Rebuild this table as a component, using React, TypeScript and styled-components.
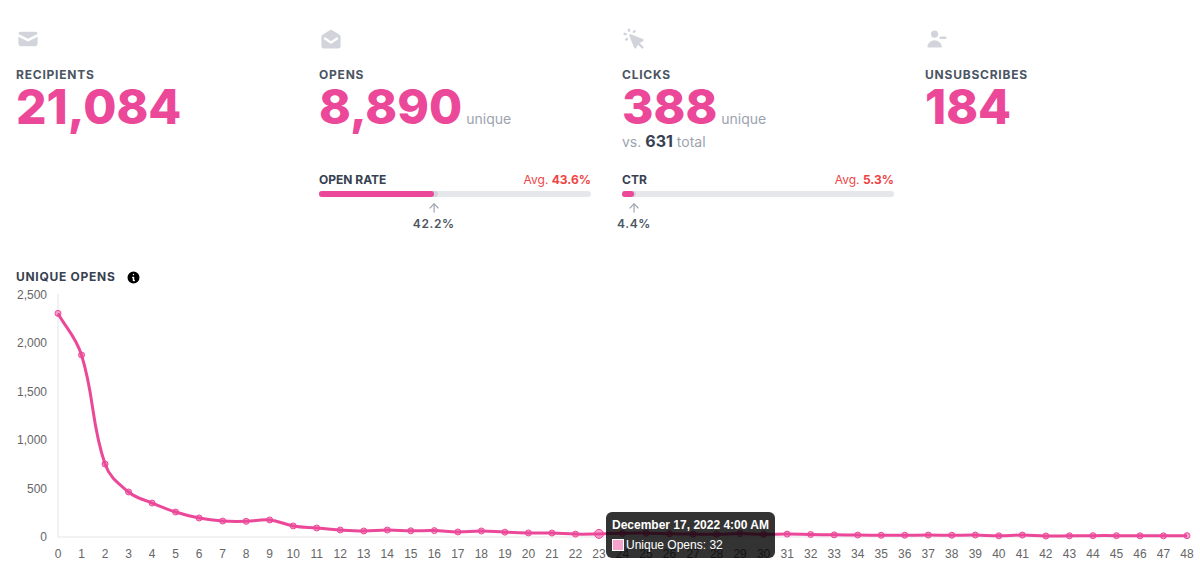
import React from 'react'
import { type ReactElement } from 'react'
import styled, { createGlobalStyle } from 'styled-components'

const GlobalStyle = createGlobalStyle`
  body {
    margin: 0;
    background: #fff;
    font-family: Inter, 'Noto Sans', sans-serif;
  }
`

const Page = styled.main`
  padding: 27px 16px 0;
  height: 588px;
  box-sizing: border-box;
  overflow: hidden;
`
const StatsGrid = styled.section`
  display: grid;
  grid-template-columns: repeat(4, 272px);
  column-gap: 31px;
`
const Column = styled.div`
  display: flex;
  flex-direction: column;
`
const StatBlock = styled.div`
  height: 145px;
  display: flex;
  flex-direction: column;
`
const IconWrap = styled.div`
  width: 24px;
  height: 24px;
  color: #d1d5db;
  svg { display: block; }
`
const Label = styled.div`
  margin-top: 16px;
  font-size: 12px;
  line-height: 16px;
  font-weight: 700;
  letter-spacing: 0.065em;
  color: #4b5563;
`
const ValueRow = styled.div`
  display: flex;
  align-items: baseline;
  gap: 4px;
`
const BigNumber = styled.span`
  font-size: 48px;
  line-height: 1;
  font-weight: 800;
  color: #ec4899;
`
const Unit = styled.span`
  font-size: 14px;
  color: #9ca3af;
`
const Total = styled.div`
  margin-top: 0;
  font-size: 14px;
  color: #9ca3af;
  b {
    font-size: 16px;
    font-weight: 700;
    color: #374151;
  }
`
const RateHead = styled.div`
  display: flex;
  justify-content: space-between;
  align-items: baseline;
  font-size: 12px;
  line-height: 16px;
`
const RateLabel = styled.span`
  font-weight: 700;
  color: #374151;
`
const Avg = styled.span`
  color: #ef4444;
  b { font-weight: 700; }
`
const Track = styled.div`
  margin-top: 3px;
  height: 6px;
  border-radius: 3px;
  background: #e5e7eb;
  display: flex;
`
const AvgFill = styled.div`
  height: 100%;
  border-radius: 3px;
  background: #d1d5db;
  display: flex;
`
const Fill = styled.div`
  height: 100%;
  border-radius: 3px;
  background: #ec4899;
`
const Marker = styled.div`
  margin-top: 4px;
  width: max-content;
  display: flex;
  flex-direction: column;
  align-items: center;
  transform: translateX(-50%);
  color: #9ca3af;
  svg { display: block; }
`
const MarkerValue = styled.span`
  margin-top: 1px;
  font-size: 12px;
  font-weight: 600;
  letter-spacing: 0.05em;
  color: #4b5563;
`
const ChartSection = styled.section`
  margin-top: 38px;
`
const ChartTitle = styled.div`
  display: flex;
  align-items: center;
  gap: 10px;
  font-size: 12px;
  line-height: 16px;
  font-weight: 700;
  letter-spacing: 0.06em;
  color: #374151;
  svg { display: block; color: #000; }
`
const ChartWrap = styled.div`
  position: relative;
  margin-top: 2px;
  svg { display: block; }
`
const Tooltip = styled.div`
  position: absolute;
  left: 590px;
  top: 225px;
  padding: 6px;
  border-radius: 6px;
  background: rgba(0, 0, 0, 0.8);
  color: #fff;
  font-family: 'Liberation Sans', Arial, sans-serif;
  font-size: 12px;
  line-height: 14px;
  white-space: nowrap;
`
const TooltipTitle = styled.div`
  font-weight: 700;
  margin-bottom: 6px;
`
const TooltipBody = styled.div`
  display: flex;
  align-items: center;
  gap: 2px;
`
const Swatch = styled.span`
  width: 10px;
  height: 10px;
  border: 1px solid #fff;
  background: #f5a3cc;
`

const MailIcon = (): ReactElement => (
  <svg width='24' height='24' viewBox='0 0 20 20' fill='currentColor'>
    <path d='M2.003 5.884L10 9.882l7.997-3.998A2 2 0 0016 4H4a2 2 0 00-1.997 1.884z' />
    <path d='M18 8.118l-8 4-8-4V14a2 2 0 002 2h12a2 2 0 002-2V8.118z' />
  </svg>
)
const MailOpenIcon = (): ReactElement => (
  <svg width='24' height='24' viewBox='0 0 20 20' fill='currentColor'>
    <path fillRule='evenodd' clipRule='evenodd' d='M2.94 6.412A2 2 0 002 8.108V16a2 2 0 002 2h12a2 2 0 002-2V8.108a2 2 0 00-.94-1.696l-6-3.75a2 2 0 00-2.12 0l-6 3.75zm2.615 2.423a1 1 0 10-1.11 1.664l5 3.333a1 1 0 001.11 0l5-3.333a1 1 0 00-1.11-1.664L10 11.798 5.555 8.835z' />
  </svg>
)
const CursorIcon = (): ReactElement => (
  <svg width='24' height='24' viewBox='0 0 20 20' fill='currentColor'>
    <path fillRule='evenodd' clipRule='evenodd' d='M6.672 1.911a1 1 0 10-1.932.518l.259.966a1 1 0 001.932-.518l-.26-.966zM2.429 4.74a1 1 0 10-.517 1.932l.966.259a1 1 0 00.517-1.932l-.966-.26zm8.814-.569a1 1 0 00-1.415-1.414l-.707.707a1 1 0 101.415 1.415l.707-.708zm-7.071 7.072l.707-.707A1 1 0 003.465 9.12l-.708.707a1 1 0 001.415 1.415zm3.2-5.171a1 1 0 00-1.3 1.3l4 10a1 1 0 001.823.075l1.38-2.759 3.018 3.02a1 1 0 001.414-1.415l-3.019-3.02 2.76-1.379a1 1 0 00-.076-1.822l-10-4z' />
  </svg>
)
const UserMinusIcon = (): ReactElement => (
  <svg width='24' height='24' viewBox='0 0 20 20' fill='currentColor'>
    <path d='M11 6a3 3 0 11-6 0 3 3 0 016 0zM14 17a6 6 0 00-12 0h12zM13 8a1 1 0 100 2h4a1 1 0 100-2h-4z' />
  </svg>
)
const InfoIcon = (): ReactElement => (
  <svg width='15' height='15' viewBox='0 0 20 20' fill='currentColor'>
    <path fillRule='evenodd' clipRule='evenodd' d='M18 10a8 8 0 11-16 0 8 8 0 0116 0zm-7-4a1 1 0 11-2 0 1 1 0 012 0zM9 9a1 1 0 000 2v3a1 1 0 001 1h1a1 1 0 100-2v-3a1 1 0 00-1-1H9z' />
  </svg>
)
const ArrowUp = (): ReactElement => (
  <svg width='14' height='14' viewBox='0 0 24 24' fill='none' stroke='currentColor' strokeWidth='2' strokeLinecap='round' strokeLinejoin='round'>
    <path d='m5 12 7-7 7 7' />
    <path d='M12 19V5' />
  </svg>
)

function RateBar ({ label, value, avg }: { label: string, value: number, avg: number }): ReactElement {
  return (
    <div>
      <RateHead>
        <RateLabel>{label}</RateLabel>
        <Avg>Avg. <b>{avg}%</b></Avg>
      </RateHead>
      <Track>
        <AvgFill style={{ width: `${avg}%` }}>
          <Fill style={{ width: `${(value / avg) * 100}%` }} />
        </AvgFill>
      </Track>
      <Marker style={{ marginLeft: `${value}%` }}>
        <ArrowUp />
        <MarkerValue>{value}%</MarkerValue>
      </Marker>
    </div>
  )
}

const opens = [
  2310, 1880, 754, 465, 351, 258, 196, 165, 162, 176, 114, 93, 72, 62, 72, 64, 66,
  52, 62, 50, 42, 41, 30, 32, 38, 40, 34, 30, 28, 36, 28, 30, 26, 22, 20, 18, 18,
  20, 18, 20, 12, 20, 10, 12, 14, 14, 12, 12, 14
]

const CHART_W = 1184
const CHART_H = 302
const X0 = 42
const X1 = 1171
const Y_TOP = 8
const Y_BOTTOM = 250
const MAX = 2500

interface Pt { x: number, y: number }

const px = (i: number): number => X0 + (i * (X1 - X0)) / (opens.length - 1)
const py = (v: number): number => Y_BOTTOM - (v / MAX) * (Y_BOTTOM - Y_TOP)

function buildPath (pts: Pt[], t = 0.4): string {
  const ctrl = pts.map((cur, i) => {
    const prev = pts[i - 1] ?? cur
    const next = pts[i + 1] ?? cur
    const d01 = Math.hypot(cur.x - prev.x, cur.y - prev.y)
    const d12 = Math.hypot(next.x - cur.x, next.y - cur.y)
    const total = d01 + d12 || 1
    const fa = (t * d01) / total
    const fb = (t * d12) / total
    return {
      prev: { x: cur.x - fa * (next.x - prev.x), y: Math.min(Y_BOTTOM, cur.y - fa * (next.y - prev.y)) },
      next: { x: cur.x + fb * (next.x - prev.x), y: Math.min(Y_BOTTOM, cur.y + fb * (next.y - prev.y)) }
    }
  })
  let d = `M${pts[0].x},${pts[0].y}`
  for (let i = 1; i < pts.length; i++) {
    const a = ctrl[i - 1].next
    const b = ctrl[i].prev
    d += ` C${a.x},${a.y} ${b.x},${b.y} ${pts[i].x},${pts[i].y}`
  }
  return d
}

function OpensChart (): ReactElement {
  const pts = opens.map((v, i) => ({ x: px(i), y: py(v) }))
  const ticks = [2500, 2000, 1500, 1000, 500, 0]
  const font = "'Liberation Sans', Arial, sans-serif"
  return (
    <ChartWrap>
      <svg width={CHART_W} height={CHART_H}>
        <line x1={X0} y1={Y_TOP - 1} x2={X0} y2={Y_BOTTOM} stroke='#e5e5e5' />
        <line x1={X0} y1={Y_BOTTOM} x2={X1} y2={Y_BOTTOM} stroke='#e5e5e5' />
        {ticks.map(t => (
          <text key={t} x={31} y={py(t) + 4} textAnchor='end' fontFamily={font} fontSize='12' fill='#666'>
            {t.toLocaleString('en-US')}
          </text>
        ))}
        {opens.map((_, i) => (
          <text key={i} x={px(i)} y={271} textAnchor='middle' fontFamily={font} fontSize='12' fill='#666'>
            {i}
          </text>
        ))}
        <path d={buildPath(pts)} fill='none' stroke='#ec4899' strokeWidth='3' />
        {pts.map((p, i) => (
          <circle key={i} cx={p.x} cy={p.y} r={i === 23 ? 4.5 : 3} fill='rgba(236,72,153,0.5)' stroke='#ec4899' strokeWidth='1' />
        ))}
      </svg>
      <Tooltip>
        <TooltipTitle>December 17, 2022 4:00 AM</TooltipTitle>
        <TooltipBody>
          <Swatch />
          <span>Unique Opens: 32</span>
        </TooltipBody>
      </Tooltip>
    </ChartWrap>
  )
}

export default function App (): ReactElement {
  return (
    <>
      <GlobalStyle />
      <Page>
        <StatsGrid>
          <Column>
            <StatBlock>
              <IconWrap><MailIcon /></IconWrap>
              <Label>RECIPIENTS</Label>
              <ValueRow><BigNumber>21,084</BigNumber></ValueRow>
            </StatBlock>
          </Column>
          <Column>
            <StatBlock>
              <IconWrap><MailOpenIcon /></IconWrap>
              <Label>OPENS</Label>
              <ValueRow><BigNumber>8,890</BigNumber><Unit>unique</Unit></ValueRow>
            </StatBlock>
            <RateBar label='OPEN RATE' value={42.2} avg={43.6} />
          </Column>
          <Column>
            <StatBlock>
              <IconWrap><CursorIcon /></IconWrap>
              <Label>CLICKS</Label>
              <ValueRow><BigNumber>388</BigNumber><Unit>unique</Unit></ValueRow>
              <Total>vs. <b>631</b> total</Total>
            </StatBlock>
            <RateBar label='CTR' value={4.4} avg={5.3} />
          </Column>
          <Column>
            <StatBlock>
              <IconWrap><UserMinusIcon /></IconWrap>
              <Label>UNSUBSCRIBES</Label>
              <ValueRow><BigNumber>184</BigNumber></ValueRow>
            </StatBlock>
          </Column>
        </StatsGrid>
        <ChartSection>
          <ChartTitle>UNIQUE OPENS <InfoIcon /></ChartTitle>
          <OpensChart />
        </ChartSection>
      </Page>
    </>
  )
}
